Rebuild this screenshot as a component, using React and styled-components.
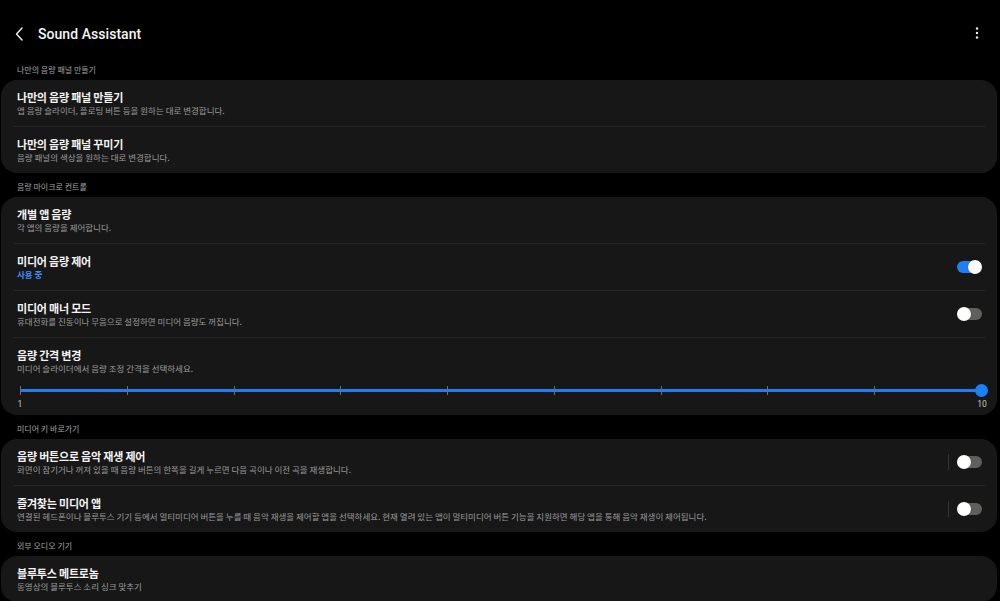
import React from 'react'
import styled, { createGlobalStyle } from 'styled-components'

const GlobalStyle = createGlobalStyle`
  html, body {
    margin: 0;
    padding: 0;
    background: #000;
    overflow: hidden;
  }
  * { box-sizing: border-box; }
`;

const KR = `"Noto Sans CJK KR", "Noto Sans", sans-serif`;

const sections = [
  {
    label: '나만의 음량 패널 만들기',
    rows: [
      { title: '나만의 음량 패널 만들기', sub: '앱 음량 슬라이더, 플로팅 버튼 등을 원하는 대로 변경합니다.' },
      { title: '나만의 음량 패널 꾸미기', sub: '음량 패널의 색상을 원하는 대로 변경합니다.' },
    ],
  },
  {
    label: '음량 마이크로 컨트롤',
    rows: [
      { title: '개별 앱 음량', sub: '각 앱의 음량을 제어합니다.' },
      { title: '미디어 음량 제어', sub: '사용 중', active: true, toggle: true, on: true },
      { title: '미디어 매너 모드', sub: '휴대전화를 진동이나 무음으로 설정하면 미디어 음량도 꺼집니다.', toggle: true },
      { title: '음량 간격 변경', sub: '미디어 슬라이더에서 음량 조정 간격을 선택하세요.', slider: true },
    ],
  },
  {
    label: '미디어 키 바로가기',
    rows: [
      { title: '음량 버튼으로 음악 재생 제어', sub: '화면이 잠기거나 꺼져 있을 때 음량 버튼의 한쪽을 길게 누르면 다음 곡이나 이전 곡을 재생합니다.', toggle: true, split: true },
      { title: '즐겨찾는 미디어 앱', sub: '연결된 헤드폰이나 블루투스 기기 등에서 멀티미디어 버튼을 누를 때 음악 재생을 제어할 앱을 선택하세요. 현재 열려 있는 앱이 멀티미디어 버튼 기능을 지원하면 해당 앱을 통해 음악 재생이 제어됩니다.', toggle: true, split: true },
    ],
  },
  {
    label: '외부 오디오 기기',
    rows: [
      { title: '블루투스 메트로놈', sub: '동영상의 블루투스 소리 싱크 맞추기' },
    ],
  },
];

function Toggle({ on }) {
  return (
    <Switch $on={on}>
      <Knob $on={on} />
    </Switch>
  );
}

function StepSlider() {
  const ticks = Array.from({ length: 10 });
  return (
    <SliderWrap>
      <TrackArea>
        <Track />
        <Ticks>
          {ticks.map((_, i) => <Tick key={i} />)}
        </Ticks>
        <Thumb />
      </TrackArea>
      <SliderLabels>
        <SliderLabel>1</SliderLabel>
        <SliderLabel>10</SliderLabel>
      </SliderLabels>
    </SliderWrap>
  );
}

export default function App() {
  return (
    <>
      <GlobalStyle />
      <Page>
        <Header>
          <BackBtn>
            <svg width="10" height="14" viewBox="0 0 10 14">
              <polyline points="7,1 1.5,7 7,13" fill="none" stroke="#f2f2f2" strokeWidth="1.4" strokeLinecap="round" strokeLinejoin="round" />
            </svg>
          </BackBtn>
          <Title>Sound Assistant</Title>
          <More>
            <svg width="4" height="14" viewBox="0 0 4 14">
              <circle cx="2" cy="2.5" r="1.2" fill="#eee" />
              <circle cx="2" cy="7" r="1.2" fill="#eee" />
              <circle cx="2" cy="11.5" r="1.2" fill="#eee" />
            </svg>
          </More>
        </Header>
        {sections.map((s, si) => (
          <Section key={si}>
            <SectionLabel>{s.label}</SectionLabel>
            <Card>
              {s.rows.map((r, ri) => (
                <React.Fragment key={ri}>
                  {ri > 0 && <Divider />}
                  <Row $slider={r.slider}>
                    <RowMain>
                      <RowText>
                        <RowTitle>{r.title}</RowTitle>
                        <RowSub $active={r.active}>{r.sub}</RowSub>
                      </RowText>
                      {r.toggle && (
                        <RowSide>
                          {r.split && <VSep />}
                          <Toggle on={r.on} />
                        </RowSide>
                      )}
                    </RowMain>
                    {r.slider && <StepSlider />}
                  </Row>
                </React.Fragment>
              ))}
            </Card>
          </Section>
        ))}
      </Page>
    </>
  );
}

const Page = styled.div`
  width: 1000px;
  height: 601px;
  overflow: hidden;
  background: #000;
  color: #f2f2f2;
  font-family: ${KR};
`;

const Header = styled.div`
  height: 64px;
  padding: 4px 17px 0 15px;
  display: flex;
  align-items: center;
`;

const BackBtn = styled.div`
  width: 10px;
  height: 14px;
  display: flex;
  margin-right: 13px;
`;

const Title = styled.h1`
  margin: 0;
  flex: 1;
  font-family: Roboto, "Noto Sans", sans-serif;
  font-size: 14px;
  font-weight: 500;
  color: #f5f5f5;
  letter-spacing: 0.05px;
`;

const More = styled.div`
  width: 4px;
  height: 14px;
  display: flex;
  margin-right: 4px;
  margin-top: -2px;
`;

const Section = styled.section`
  padding-top: 8px;
  &:first-of-type {
    padding-top: 0;
  }
`;

const SectionLabel = styled.div`
  padding: 0 17px;
  height: 12px;
  line-height: 12px;
  font-size: 8px;
  color: #a3a3a3;
  margin-bottom: 4px;
`;

const Card = styled.div`
  margin: 0 3px 0 1px;
  background: #171717;
  border-radius: 16px;
  overflow: hidden;
`;

const Divider = styled.div`
  height: 1px;
  margin: 0 12px 0 13px;
  background: #262626;
`;

const Row = styled.div`
  padding: 10px 15px ${p => (p.$slider ? '5px' : '10px')} 16px;
`;

const RowMain = styled.div`
  display: flex;
  align-items: center;
  gap: 12px;
`;

const RowText = styled.div`
  flex: 1;
  min-width: 0;
`;

const RowTitle = styled.div`
  font-size: 11px;
  font-weight: 700;
  line-height: 14px;
  letter-spacing: -0.2px;
  color: #f4f4f4;
`;

const RowSub = styled.div`
  font-size: 8.5px;
  line-height: 12px;
  color: ${p => (p.$active ? '#3e8ff5' : '#9c9c9c')};
  font-weight: ${p => (p.$active ? 700 : 400)};
  white-space: nowrap;
`;

const RowSide = styled.div`
  display: flex;
  align-items: center;
  gap: 8px;
`;

const VSep = styled.div`
  width: 1px;
  height: 16px;
  background: #333;
`;

const Switch = styled.div`
  position: relative;
  width: 25px;
  height: 12px;
  border-radius: 6px;
  background: ${p => (p.$on ? '#1f7ff3' : '#5f5f5b')};
`;

const Knob = styled.div`
  position: absolute;
  top: -1px;
  left: ${p => (p.$on ? '11px' : '0')};
  width: 14px;
  height: 14px;
  border-radius: 50%;
  background: #fff;
  box-shadow: 0 0 1px rgba(0, 0, 0, 0.4);
`;

const SliderWrap = styled.div`
  padding: 12px 0 0 3px;
`;

const TrackArea = styled.div`
  position: relative;
  height: 9px;
`;

const Track = styled.div`
  position: absolute;
  left: 0;
  right: 0;
  top: 3px;
  height: 3px;
  background: #1a80f5;
`;

const Ticks = styled.div`
  position: absolute;
  inset: 0;
  display: flex;
  justify-content: space-between;
`;

const Tick = styled.div`
  width: 1px;
  height: 9px;
  background: #6f6f6f;
`;

const Thumb = styled.div`
  position: absolute;
  right: -6px;
  top: -2px;
  width: 13px;
  height: 13px;
  border-radius: 50%;
  background: #1a80f5;
`;

const SliderLabels = styled.div`
  display: flex;
  justify-content: space-between;
  margin-top: 3px;
  height: 12px;
`;

const SliderLabel = styled.div`
  width: 0;
  display: flex;
  justify-content: center;
  font-family: Roboto, sans-serif;
  font-size: 8.5px;
  line-height: 12px;
  color: #c4c4c4;
`;
